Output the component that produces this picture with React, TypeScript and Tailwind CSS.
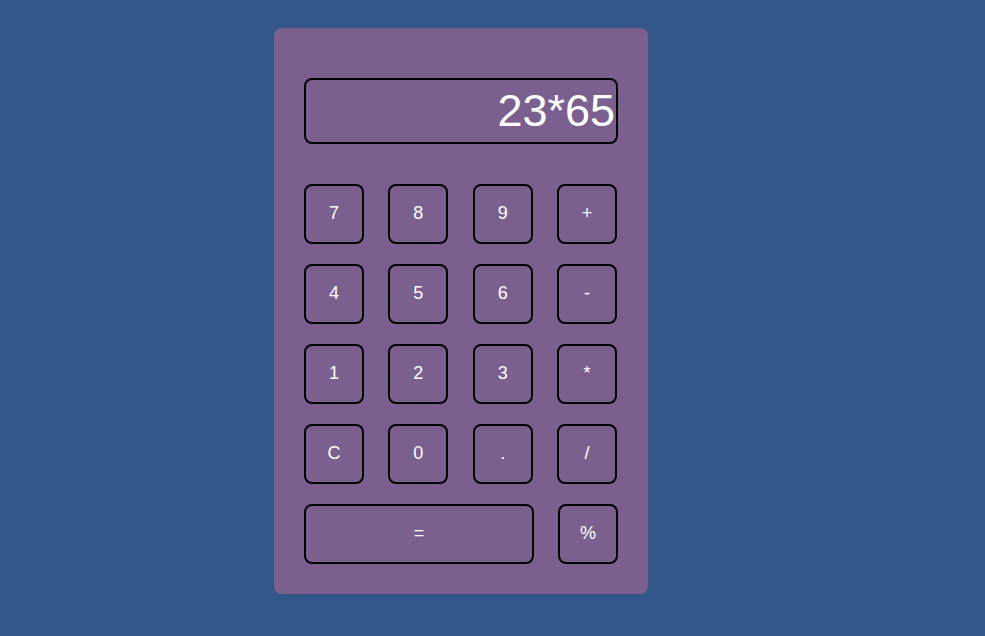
import React from "react";

const rows = [
  ["7", "8", "9", "+"],
  ["4", "5", "6", "-"],
  ["1", "2", "3", "*"],
  ["C", "0", ".", "/"],
];

export default function App() {
  return (
    <div
      className="w-full h-[636px] bg-[#345789] pt-[28px] pl-[274px]"
      style={{ fontFamily: '"Liberation Sans", Arial, sans-serif' }}
    >
      <div className="w-[374px] h-[566px] bg-[#7a5f8f] rounded-[8px] pt-[50px] px-[30px] pb-[30px] flex flex-col">
        <div className="h-[66px] border-2 border-black rounded-[8px] flex items-center justify-end pr-[1px] text-white text-[45px] leading-normal">
          23*65
        </div>
        <div className="mt-[40px] flex flex-col gap-5">
          {rows.map((r, i) => (
            <div key={i} className="flex justify-between pr-[1px]">
              {r.map((k) => (
                <button
                  key={k}
                  className="w-[60px] h-[60px] border-2 border-black rounded-[8px] text-white text-[18px] leading-none pb-[2px] flex items-center justify-center"
                >
                  {k}
                </button>
              ))}
            </div>
          ))}
          <div className="flex justify-between">
            <button className="w-[230px] h-[60px] border-2 border-black rounded-[8px] text-white text-[18px] leading-none pb-[2px] flex items-center justify-center">
              =
            </button>
            <button className="w-[60px] h-[60px] border-2 border-black rounded-[8px] text-white text-[18px] leading-none pb-[2px] flex items-center justify-center">
              %
            </button>
          </div>
        </div>
      </div>
    </div>
  );
}
